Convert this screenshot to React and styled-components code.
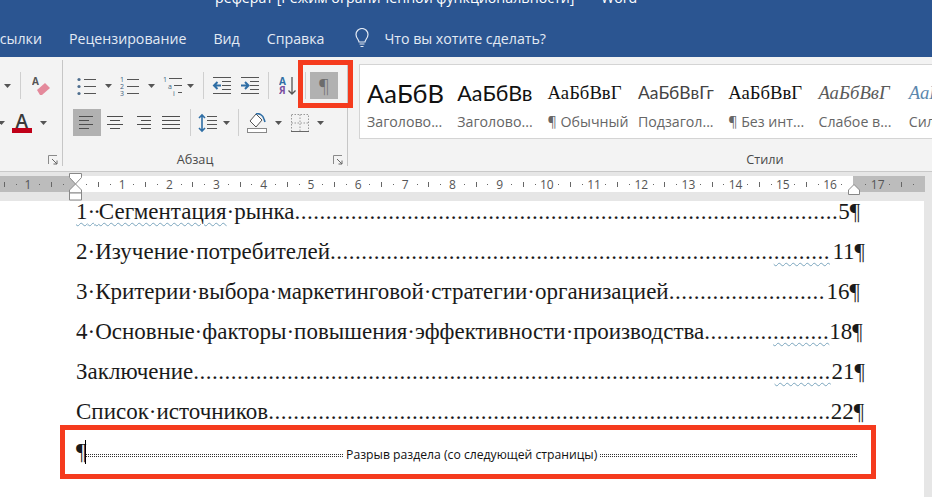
import React from 'react';
import styled, { createGlobalStyle } from 'styled-components';

const GlobalStyle = createGlobalStyle`
    html, body {
        margin: 0;
        padding: 0;
        background: #fff;
    }
    #root {
        width: 932px;
        height: 497px;
        overflow: hidden;
    }
`;

const UI = '"Open Sans", "Noto Sans", sans-serif';
const SERIF = '"Liberation Serif", serif';
const RED = '#f53b1e';
const STEP = 11.8;

const TitleBar = styled.header`
    height: 57px;
    background: #2b5591;
    color: #e3eaf4;
    font-family: ${UI};
    overflow: hidden;
`;

const Title = styled.div`
    height: 20px;
    padding-left: 215px;
    margin-top: -12px;
    font-size: 14.200px;
    line-height: 20px;
    white-space: pre;
    color: #fff;
`;

const Tabs = styled.nav`
    display: flex;
    align-items: center;
    height: 30px;
    margin-top: 15px;
    font-size: 14.200px;
    white-space: nowrap;
`;

const Tab = styled.span`
    margin-left: ${(p) => p.$left}px;
`;

const Ribbon = styled.section`
    display: flex;
    height: 115px;
    background: #f3f3f3;
    border-bottom: 1px solid #c9c9c9;
    box-sizing: border-box;
    font-family: ${UI};
    color: #444;
`;

const Group = styled.div`
    position: relative;
    display: flex;
    flex-direction: column;
    flex: none;
    width: ${(p) => p.$w}px;
    margin: 3px 0 5px;
    box-sizing: border-box;
    border-right: ${(p) => (p.$last ? 'none' : '1px solid #c6c6c6')};
`;

const Rows = styled.div`
    display: flex;
    flex-direction: column;
    gap: 10px;
    padding: 12px 0 0 ${(p) => p.$left || 0}px;
`;

const Row = styled.div`
    display: flex;
    align-items: center;
    height: 27px;
`;

const Tool = styled.div`
    display: flex;
    align-items: center;
    justify-content: ${(p) => (p.$split ? 'flex-start' : 'center')};
    flex: none;
    width: ${(p) => p.$w || 28}px;
    height: 27px;
    gap: ${(p) => p.$gap || 0}px;
    padding-left: ${(p) => p.$pad || 0}px;
    margin-left: ${(p) => p.$left || 0}px;
    box-sizing: border-box;
    background: ${(p) => (p.$active ? '#b1b1b1' : 'transparent')};
`;

const ToolSep = styled.div`
    flex: none;
    width: 1px;
    height: 27px;
    background: #cfcfcf;
    margin: 0 ${(p) => p.$right}px 0 ${(p) => p.$left}px;
`;

const PilcrowTool = styled(Tool)`
    position: relative;
    margin-left: 4px;
    font-family: ${UI};
    font-weight: 300;
    font-size: 19px;
    color: #6c6c6c;
`;

const Highlight = styled.div`
    position: absolute;
    left: -12px;
    top: -12px;
    width: 55px;
    height: 48px;
    box-sizing: border-box;
    border: 5px solid ${RED};
`;

const GroupFooter = styled.div`
    display: flex;
    align-items: center;
    justify-content: center;
    margin-top: auto;
    height: 14px;
    padding-right: ${(p) => p.$shift || 0}px;
    font-size: 12.700px;
    color: #4a4a4a;
`;

const LauncherSlot = styled.span`
    position: absolute;
    right: 4px;
    bottom: 1px;
    display: flex;
`;

const Gallery = styled.div`
    display: flex;
    margin: 4px 0 0 11px;
    height: 75px;
    background: #fff;
    border: 1px solid #d4d4d4;
    box-sizing: border-box;
    overflow: hidden;
`;

const StyleItem = styled.div`
    flex: none;
    display: flex;
    flex-direction: column;
    width: 90.300px;
    padding-left: 7px;
    box-sizing: border-box;
`;

const Sample = styled.div`
    height: 36px;
    margin-top: 10px;
    width: 76px;
    white-space: nowrap;
    line-height: 36px;
    color: ${(p) => p.$color || '#111'};
    font-family: ${(p) => p.$font || SERIF};
    font-size: ${(p) => p.$size}px;
    font-style: ${(p) => (p.$italic ? 'italic' : 'normal')};
`;

const StyleName = styled.div`
    margin-top: 2px;
    font-size: 14.200px;
    line-height: 18px;
    white-space: nowrap;
    color: #666;
`;

const RulerBand = styled.div`
    position: relative;
    height: 29px;
    padding-top: 4px;
    box-sizing: border-box;
    background: #e6e6e6;
`;

const Track = styled.div`
    display: flex;
    width: 925px;
    height: 16px;
    font-family: ${UI};
    font-size: 12px;
    color: #555;
`;

const TrackPart = styled.div`
    display: flex;
    flex: none;
    justify-content: ${(p) => (p.$end ? 'flex-end' : 'flex-start')};
    width: ${(p) => p.$w}px;
    padding: 0 ${(p) => p.$right || 0}px 0 ${(p) => p.$left || 0}px;
    box-sizing: border-box;
    background: ${(p) => (p.$dark ? '#bcbcbc' : '#fff')};
`;

const Mark = styled.span`
    display: flex;
    flex: none;
    align-items: center;
    justify-content: center;
    width: ${STEP}px;
    height: 16px;
`;

const Tick = styled.i`
    display: block;
    width: 1px;
    height: ${(p) => (p.$long ? 5 : 1)}px;
    background: #666;
`;

const RulerHandle = styled.svg`
    position: absolute;
    left: ${(p) => p.$x}px;
    top: ${(p) => p.$y}px;
`;

const Page = styled.main`
    height: 296px;
    background: #fff;
    border-right: 8px solid #e6e6e6;
    width: 932px;
    box-sizing: border-box;
    font-family: ${SERIF};
    font-size: 23px;
    color: #1a1a1a;
`;

const TocList = styled.div`
    display: flex;
    flex-direction: column;
    gap: 16px;
    padding-left: 76px;
`;

const TocRow = styled.div`
    display: flex;
    width: ${(p) => p.$end - 76}px;
    height: 24px;
    line-height: 21px;
    white-space: nowrap;
`;

const Leader = styled.span`
    letter-spacing: 0.5px;
`;

const Wavy = styled.span`
    text-decoration: underline wavy #7aa5bd 1px;
    text-underline-offset: 3px;
    letter-spacing: ${(p) => (p.$dots ? 0.5 : 0)}px;
`;

const TightDots = styled.span`
    letter-spacing: -2px;
`;

const PageNum = styled.span`
    margin-left: auto;
`;

const SectionFrame = styled.div`
    display: flex;
    align-items: center;
    width: 816px;
    height: 54px;
    margin-left: 60px;
    padding: 0 14px 0 11px;
    box-sizing: border-box;
    border: 5px solid ${RED};
`;

const Caret = styled.span`
    flex: none;
    display: block;
    width: 1px;
    height: 24px;
    margin-left: -1px;
    background: #000;
`;

const BreakLine = styled.span`
    flex: 1;
    height: 1px;
    border-top: 1px dotted #333;
    border-bottom: 1px dotted #333;
    margin-top: 6px;
`;

const BreakText = styled.span`
    flex: none;
    margin: 6px 3px 0;
    font-family: ${UI};
    font-size: 12.200px;
    line-height: 14px;
    color: #111;
`;

const Icon = ({ w = 20, h = 20, children }) => (
    <svg width={w} height={h} viewBox={`0 0 ${w} ${h}`} fill="none" style={{ flex: 'none', display: 'block' }}>
        {children}
    </svg>
);

const DropArrow = () => (
    <Icon w={7} h={4}>
        <path d="M0 0h7L3.500 4z" fill="#555" />
    </Icon>
);

const Launcher = () => (
    <Icon w={10} h={10}>
        <path d="M.5 9V.5H9" stroke="#8a8a8a" />
        <path d="M4 4l5 5M9 5.500V9H5.500" stroke="#666" />
    </Icon>
);

const Lines = ({ rows, color = '#555' }) => (
    <>
        {rows.map(([x1, x2, y], i) => (
            <path key={i} d={`M${x1} ${y}.5H${x2}`} stroke={color} />
        ))}
    </>
);

const BulletList = () => (
    <Icon>
        <Lines rows={[[7, 19, 3], [7, 19, 10], [7, 19, 17]]} />
        <circle cx="2" cy="3.500" r="1.600" fill="#4f6f8f" />
        <circle cx="2" cy="10.500" r="1.600" fill="#4f6f8f" />
        <circle cx="2" cy="17.500" r="1.600" fill="#4f6f8f" />
    </Icon>
);

const TinyNum = styled.text`
    font-family: ${UI};
    font-size: 7px;
    fill: #3d5f80;
`;

const NumberedList = () => (
    <Icon>
        <Lines rows={[[7, 19, 3], [7, 19, 10], [7, 19, 17]]} />
        <TinyNum x="0" y="6">1</TinyNum>
        <TinyNum x="0" y="13">2</TinyNum>
        <TinyNum x="0" y="20">3</TinyNum>
    </Icon>
);

const MultiLevel = () => (
    <Icon>
        <Lines rows={[[6, 19, 2], [11, 19, 9], [15, 19, 16]]} />
        <TinyNum x="0" y="6">1</TinyNum>
        <TinyNum x="5" y="13">a</TinyNum>
        <TinyNum x="10" y="20">i</TinyNum>
    </Icon>
);

const Outdent = () => (
    <Icon>
        <Lines rows={[[1, 19, 1], [10, 19, 5], [10, 19, 9], [10, 19, 13], [1, 19, 17]]} />
        <path d="M9 9.500H2M5.500 6l-3.500 3.500L5.500 13" stroke="#2f6ea5" strokeWidth="2" />
    </Icon>
);

const Indent = () => (
    <Icon>
        <Lines rows={[[1, 19, 1], [10, 19, 5], [10, 19, 9], [10, 19, 13], [1, 19, 17]]} />
        <path d="M1 9.500h7M5 6l3.500 3.500L5 13" stroke="#2f6ea5" strokeWidth="2" />
    </Icon>
);

const SortLabel = styled.text`
    font-family: ${UI};
    font-size: 10px;
    font-weight: 700;
    fill: ${(p) => p.$fill};
`;

const SortIcon = () => (
    <Icon w={18}>
        <SortLabel x="0" y="9" $fill="#2f6ea5">А</SortLabel>
        <SortLabel x="0" y="18" $fill="#7a4fa0">Я</SortLabel>
        <path d="M13 1v17M9.500 14.500L13 18l3.500-3.500" stroke="#555" strokeWidth="1.300" />
    </Icon>
);

const AlignIcon = ({ rows }) => (
    <Icon w={18}>
        <Lines rows={rows} color="#4d4d4d" />
    </Icon>
);

const LineSpacing = () => (
    <Icon>
        <Lines rows={[[9, 19, 3], [9, 19, 7], [9, 19, 11], [9, 19, 15]]} />
        <path d="M4 2v16M1 5l3-3 3 3M1 15l3 3 3-3" stroke="#2f6ea5" strokeWidth="1.600" />
    </Icon>
);

const FillIcon = () => (
    <Icon>
        <path d="M9 1l-6 7 6 6 6-7z" stroke="#555" fill="#fff" />
        <path d="M9 1c3-1 7 1 8 5l1 3" stroke="#2f6ea5" strokeWidth="1.600" />
        <rect x=".5" y="15.500" width="19" height="4" stroke="#888" fill="#fff" />
    </Icon>
);

const BordersIcon = () => (
    <Icon>
        <path d="M1.500 1.500h17v17h-17zM10 1.500v17M1.500 10h17" stroke="#999" strokeDasharray="1.500 1.500" />
        <path d="M1 18.500h18" stroke="#666" />
    </Icon>
);

const EraserIcon = () => (
    <Icon w={18}>
        <SortLabel x="0" y="9" $fill="#555">А</SortLabel>
        <path d="M5 14l8-7 5 5-8 7h-2z" fill="#e4899b" />
    </Icon>
);

const FontColorLetter = styled.text`
    font-family: ${UI};
    font-size: 19px;
    font-weight: 600;
    fill: #3a3a3a;
`;

const FontColorIcon = () => (
    <Icon>
        <FontColorLetter x="3.500" y="14.500">А</FontColorLetter>
        <rect x="0" y="15" width="20" height="5" fill="#c00018" />
    </Icon>
);

const BulbIcon = () => (
    <Icon w={14} h={20}>
        <path d="M4 14c0-2-3-4-3-7.500a6 6 0 0 1 12 0C13 10 10 12 10 14z" stroke="#e3eaf4" strokeWidth="1.200" />
        <path d="M4.500 16h5M5.500 18.500h3" stroke="#e3eaf4" strokeWidth="1.200" />
    </Icon>
);

const LATO = 'Lato, sans-serif';

const styleItems = [
    { text: 'АаБбВ', name: 'Заголово...', size: 25.500, font: LATO },
    { text: 'АаБбВв', name: 'Заголово...', size: 21.500, font: LATO },
    { text: 'АаБбВвГ', name: '¶ Обычный', size: 18.700 },
    { text: 'АаБбВвГг', name: 'Подзагол...', size: 17.500, font: LATO, color: '#444' },
    { text: 'АаБбВвГ', name: '¶ Без инт...', size: 18.700 },
    { text: 'АаБбВвГ', name: 'Слабое в...', size: 18.700, italic: true, color: '#5a5a5a' },
    { text: 'АаБбВвГ', name: 'Сильное...', size: 18.700, italic: true, color: '#5b87ad' },
];

const tocRows = [
    { num: '5', end: 860, dots: 87, label: '·рынка', first: true },
    { num: '11', end: 865, dots: 71, wavy: 9, label: '2·Изучение·потребителей' },
    { num: '16', end: 860, dots: 25, label: '3·Критерии·выбора·маркетинговой·стратегии·организацией' },
    { num: '18', end: 860, dots: 11, wavy: 9, label: '4·Основные·факторы·повышения·эффективности·производства' },
    { num: '21', end: 865, dots: 93, wavy: 9, label: 'Заключение' },
    { num: '22', end: 863, dots: 90, label: 'Список·источников' },
];

const rulerMark = (i) => {
    const n = Math.abs(i);
    if (n % 4 === 0) return <Mark key={i}>{n / 4}</Mark>;
    return (
        <Mark key={i}>
            <Tick $long={n % 4 === 2} />
        </Mark>
    );
};

const range = (from, to) => Array.from({ length: to - from + 1 }, (_, k) => from + k);

const App = () => (
    <>
        <GlobalStyle />
        <TitleBar>
            <Title>{'реферат [Режим ограниченной функциональности]   -   Word'}</Title>
            <Tabs>
                <Tab $left={-7}>ссылки</Tab>
                <Tab $left={27}>Рецензирование</Tab>
                <Tab $left={27}>Вид</Tab>
                <Tab $left={27}>Справка</Tab>
                <Tab $left={31}><BulbIcon /></Tab>
                <Tab $left={15}>Что вы хотите сделать?</Tab>
            </Tabs>
        </TitleBar>

        <Ribbon>
            <Group $w={63}>
                <Rows>
                    <Row>
                        <Tool $w={20} $split $pad={4}><DropArrow /></Tool>
                        <ToolSep $left={0} $right={11} />
                        <EraserIcon />
                    </Row>
                    <Row>
                        <Tool $w={14} $split $left={-2}><DropArrow /></Tool>
                        <FontColorIcon />
                        <Tool $w={16} $split $pad={8}><DropArrow /></Tool>
                    </Row>
                </Rows>
                <LauncherSlot><Launcher /></LauncherSlot>
            </Group>

            <Group $w={285}>
                <Rows $left={9}>
                    <Row>
                        <Tool $w={43} $split $pad={5} $gap={8}><BulletList /><DropArrow /></Tool>
                        <Tool $w={43} $split $pad={5} $gap={8}><NumberedList /><DropArrow /></Tool>
                        <Tool $w={40} $split $pad={5} $gap={4}><MultiLevel /><DropArrow /></Tool>
                        <ToolSep $left={5} $right={4} />
                        <Tool><Outdent /></Tool>
                        <Tool><Indent /></Tool>
                        <ToolSep $left={4} $right={3} />
                        <Tool $w={32}><SortIcon /></Tool>
                        <ToolSep $left={1} $right={0} />
                        <PilcrowTool $active>
                            ¶
                            <Highlight />
                        </PilcrowTool>
                    </Row>
                    <Row>
                        <Tool $active $left={1}><AlignIcon rows={[[1, 15, 3], [1, 11, 7], [1, 15, 11], [1, 11, 15]]} /></Tool>
                        <Tool><AlignIcon rows={[[1, 17, 3], [4, 14, 7], [1, 17, 11], [4, 14, 15]]} /></Tool>
                        <Tool><AlignIcon rows={[[3, 17, 3], [7, 17, 7], [3, 17, 11], [7, 17, 15]]} /></Tool>
                        <Tool><AlignIcon rows={[[0, 18, 3], [0, 18, 7], [0, 18, 11], [0, 18, 15]]} /></Tool>
                        <ToolSep $left={5} $right={2} />
                        <Tool $w={40} $split $pad={5} $gap={5}><LineSpacing /><DropArrow /></Tool>
                        <ToolSep $left={5} $right={0} />
                        <Tool $w={47} $split $pad={8} $gap={8}><FillIcon /><DropArrow /></Tool>
                        <Tool $w={40} $split $pad={4} $gap={7}><BordersIcon /><DropArrow /></Tool>
                    </Row>
                </Rows>
                <GroupFooter $shift={20}>Абзац</GroupFooter>
                <LauncherSlot><Launcher /></LauncherSlot>
            </Group>

            <Group $w={834} $last>
                <Gallery>
                    {styleItems.map((s, i) => (
                        <StyleItem key={i}>
                            <Sample $size={s.size} $font={s.font} $italic={s.italic} $color={s.color}>{s.text}</Sample>
                            <StyleName>{s.name}</StyleName>
                        </StyleItem>
                    ))}
                </Gallery>
                <GroupFooter>Стили</GroupFooter>
            </Group>
        </Ribbon>

        <RulerBand>
            <Track>
                <TrackPart $dark $end $w={75} $right={5.9}>{range(-6, -1).map(rulerMark)}</TrackPart>
                <TrackPart $w={778} $left={5.9}>{range(1, 65).map(rulerMark)}</TrackPart>
                <TrackPart $dark $w={72} $left={7}>{range(67, 71).map(rulerMark)}</TrackPart>
            </Track>
            <RulerHandle $x={69} $y={1} width="13" height="28" viewBox="0 0 13 28" fill="none">
                <path d="M.5.5h12v4L6.500 11 .5 4.500z" fill="#fff" stroke="#888" />
                <path d="M6.500 11l6 6v3H.5v-3z" fill="#fff" stroke="#888" />
                <path d="M.5 20h12v7H.5z" fill="#fff" stroke="#888" />
            </RulerHandle>
            <RulerHandle $x={848} $y={12} width="12" height="11" viewBox="0 0 12 11" fill="none">
                <path d="M6 .5l5.500 5.500v4.500H.5V6z" fill="#fff" stroke="#888" />
            </RulerHandle>
        </RulerBand>

        <Page>
            <TocList>
                {tocRows.map((r) => (
                    <TocRow key={r.num} $end={r.end}>
                        {r.first && <Wavy>1<TightDots>··</TightDots>Сегментация</Wavy>}
                        <span>{r.label}</span>
                        <Leader>{'.'.repeat(r.dots)}</Leader>
                        {r.wavy && <Wavy $dots>{'.'.repeat(r.wavy)}</Wavy>}
                        <PageNum>{r.num}¶</PageNum>
                    </TocRow>
                ))}
            </TocList>
            <SectionFrame>
                <span>¶</span>
                <Caret />
                <BreakLine />
                <BreakText>Разрыв раздела (со следующей страницы)</BreakText>
                <BreakLine />
            </SectionFrame>
        </Page>
    </>
);

export default App;
